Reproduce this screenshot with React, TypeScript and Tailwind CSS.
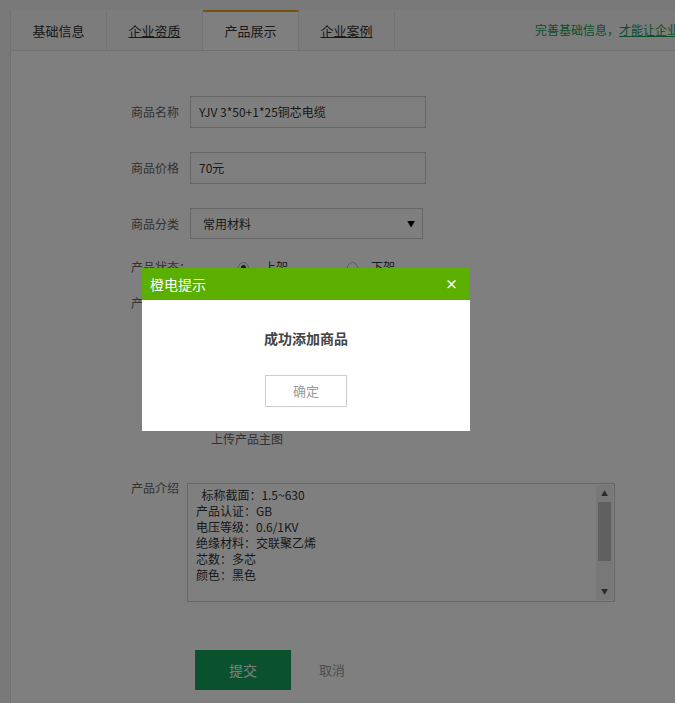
import React from 'react';

const font = { fontFamily: '"Microsoft YaHei", "Noto Sans CJK SC", "Noto Sans", sans-serif' };

const tabs = [
  { name: '基础信息', link: false },
  { name: '企业资质', link: true },
  { name: '产品展示', link: false, active: true },
  { name: '企业案例', link: true },
];

const intro = [
  '  标称截面：1.5~630',
  '产品认证：GB',
  '电压等级：0.6/1KV',
  '绝缘材料：交联聚乙烯',
  '芯数：多芯',
  '颜色：黑色',
];

const Field: React.FC<{ label: string; children: React.ReactNode }> = ({ label, children }) => (
  <div className="flex items-center mb-[24px]">
    <span className="w-[59px] text-[12px] text-[#666]">{label}</span>
    {children}
  </div>
);

const Radio: React.FC<{ checked?: boolean }> = ({ checked }) => (
  <span className="w-[11px] h-[11px] shrink-0 rounded-full border border-[#bbb] bg-white flex items-center justify-center">
    {checked && <span className="w-[5px] h-[5px] rounded-full bg-[#333]" />}
  </span>
);

export default function App() {
  return (
    <div className="relative min-h-[703px] bg-[#f2f2f2] pt-[10px] pl-[10px] overflow-hidden" style={font}>
      <div className="bg-white border-l border-[#e3e3e3] min-h-[693px]">
        {/* Tabs */}
        <div className="flex h-[41px] bg-[#f8f8f8] border-b border-[#e3e3e3] overflow-hidden whitespace-nowrap">
          {tabs.map(t => (
            <div
              key={t.name}
              className={`w-[96px] shrink-0 flex items-center justify-center text-[13px] text-[#333] border-r border-[#e6e6e6] ${t.active ? 'border-t-2 border-t-[#f0a22a] bg-white' : 'border-t-2 border-t-transparent'}`}
            >
              <span className={t.link ? 'underline' : ''}>{t.name}</span>
            </div>
          ))}
          <div className="ml-[140px] flex-1 min-w-0 overflow-hidden flex items-center text-[12px] text-[#179c52]">
            完善基础信息，<span className="underline">才能让企业</span>
          </div>
        </div>

        {/* Form */}
        <div className="pl-[120px] pt-[45px] pb-[13px]">
          <Field label="商品名称">
            <div className="w-[236px] h-[32px] border border-[#ccc] pl-[8px] flex items-center text-[12px] text-[#333]">
              YJV 3*50+1*25铜芯电缆
            </div>
          </Field>
          <Field label="商品价格">
            <div className="w-[236px] h-[32px] border border-[#ccc] pl-[8px] flex items-center text-[12px] text-[#333]">
              70元
            </div>
          </Field>
          <div className="flex items-center">
            <span className="w-[59px] text-[12px] text-[#666]">商品分类</span>
            <div className="w-[233px] h-[31px] border border-[#ccc] pl-[12px] pr-[7px] flex items-center justify-between text-[12px] text-[#333]">
              <span>常用材料</span>
              <span className="text-[8px] text-black">▼</span>
            </div>
          </div>

          <div className="flex items-center mt-[20px] h-[16px] text-[12px] text-[#666]">
            <span className="w-[107px]">产品状态：</span>
            <Radio checked />
            <span className="ml-[15px] w-[83px] text-[#333]">上架</span>
            <Radio />
            <span className="ml-[13px] text-[#333]">下架</span>
          </div>

          <div className="flex mt-[20px]">
            <span className="w-[59px] text-[12px] text-[#666] leading-[16px]">产品主图</span>
            <div className="flex flex-col items-center">
              <div className="w-[114px] h-[114px] border border-dashed border-[#ccc] bg-[#fafafa]" />
              <span className="mt-[22px] text-[12px] text-[#666] leading-[16px]">上传产品主图</span>
            </div>
          </div>

          <div className="flex mt-[33px]">
            <span className="w-[56px] text-[12px] text-[#666] leading-[16px]">产品介绍</span>
            <div className="mt-[3px] w-[428px] h-[119px] border border-[#ccc] flex">
              <div className="flex-1 pl-[8px] pt-[3px] text-[12px] leading-[16px] text-[#333] whitespace-pre">
                {intro.map(l => (
                  <div key={l}>{l}</div>
                ))}
              </div>
              <div className="w-[17px] my-[1px] mr-[1px] bg-[#f0f0f0] flex flex-col items-center">
                <span className="h-[17px] flex items-center justify-center text-[7px] text-[#555]">▲</span>
                <div className="w-[13px] h-[59px] bg-[#c1c1c1]" />
                <div className="flex-1" />
                <span className="h-[17px] flex items-center justify-center text-[7px] text-[#555]">▼</span>
              </div>
            </div>
          </div>

          <div className="flex items-center mt-[48px] pl-[64px]">
            <button className="w-[96px] h-[40px] bg-[#14a45c] text-white text-[14px]">提交</button>
            <span className="ml-[28px] text-[13px] text-[#999]">取消</span>
          </div>
        </div>
      </div>

      {/* Overlay */}
      <div className="absolute inset-0 bg-black/50" />

      {/* Dialog */}
      <div className="absolute left-[142px] top-[268px] w-[328px] bg-white">
        <div className="h-[32px] bg-[#5aaf00] flex items-center justify-between pl-[8px] pr-[12px] text-white">
          <span className="text-[14px]">橙电提示</span>
          <span className="text-[13px] font-bold">×</span>
        </div>
        <div className="h-[131px] flex flex-col items-center pt-[29px]">
          <span className="text-[14px] leading-[18px] font-bold text-[#444]">成功添加商品</span>
          <button className="mt-[28px] w-[82px] h-[32px] border border-[#ccc] text-[13px] text-[#999]">确定</button>
        </div>
      </div>
    </div>
  );
}
